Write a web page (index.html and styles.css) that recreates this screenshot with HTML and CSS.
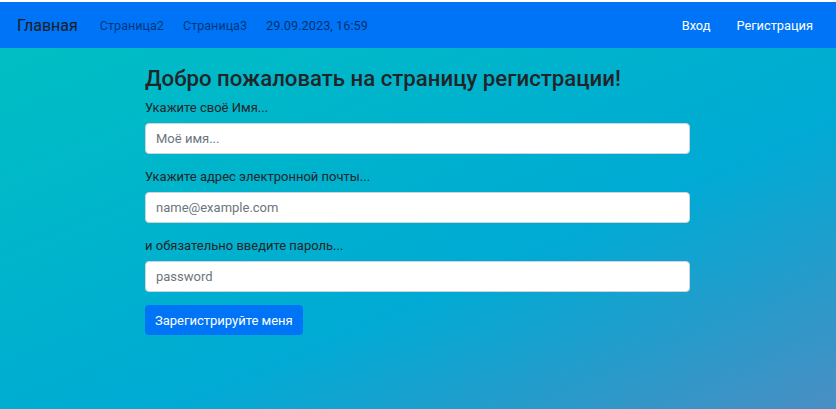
FILE: index.html
```html
<!DOCTYPE html>
<html lang="ru">
<head>
<meta charset="utf-8">
<title>Регистрация</title>
<link rel="stylesheet" href="styles.css">
</head>
<body>
<nav class="navbar">
  <div class="nav-left">
    <a class="brand" href="#">Главная</a>
    <a class="nav-link" href="#">Страница2</a>
    <a class="nav-link" href="#">Страница3</a>
    <span class="nav-date">29.09.2023, 16:59</span>
  </div>
  <div class="nav-right">
    <a class="nav-link light" href="#">Вход</a>
    <a class="nav-link light" href="#">Регистрация</a>
  </div>
</nav>
<main class="content">
  <form class="reg-form">
    <h3 class="title">Добро пожаловать на страницу регистрации!</h3>
    <label class="label" for="name">Укажите своё Имя...</label>
    <input class="field" id="name" type="text" placeholder="Моё имя...">
    <label class="label" for="email">Укажите адрес электронной почты...</label>
    <input class="field" id="email" type="email" placeholder="name@example.com">
    <label class="label" for="pass">и обязательно введите пароль...</label>
    <input class="field" id="pass" type="password" placeholder="password">
    <button class="btn" type="button">Зарегистрируйте меня</button>
  </form>
</main>
</body>
</html>
```
FILE: styles.css
```css
html, body {
  margin: 0;
  height: 100%;
}
body {
  font-family: Roboto, "Noto Sans", sans-serif;
  color: #212529;
  padding-top: 2px;
  box-sizing: border-box;
  background: #fff;
  display: flex;
  flex-direction: column;
}
.navbar {
  height: 46px;
  background: #0074f7;
  display: flex;
  align-items: center;
  justify-content: space-between;
  padding: 0 23px 0 17px;
}
.nav-left, .nav-right {
  display: flex;
  align-items: center;
}
.brand {
  font-size: 16px;
  color: #1a1d21;
  text-decoration: none;
  margin-right: 22px;
}
.nav-link {
  font-size: 12.6px;
  color: rgba(0, 0, 0, 0.55);
  text-decoration: none;
  margin-right: 19px;
}
.nav-date {
  font-size: 12.8px;
  color: rgba(0, 0, 0, 0.6);
}
.nav-right .nav-link {
  font-size: 12.8px;
  margin: 0 0 0 26px;
}
.nav-link.light {
  color: #fff;
}
.content {
  flex: 1;
  background: linear-gradient(to bottom right, #00bfc3 0%, #00aad4 60%, #4a8ec3 100%);
  display: flex;
  justify-content: center;
}
.reg-form {
  width: 545px;
  display: flex;
  flex-direction: column;
  align-items: flex-start;
  padding-top: 17px;
  margin-right: 1px;
}
.title {
  margin: 0 0 7px;
  font-size: 22.2px;
  font-weight: 500;
  line-height: 26px;
}
.label {
  font-size: 13px;
  line-height: 20px;
  margin-bottom: 5px;
}
.field {
  width: 100%;
  box-sizing: border-box;
  height: 31px;
  border: 1px solid #ced4da;
  border-radius: 4px;
  padding: 0 10px;
  font-family: inherit;
  font-size: 13px;
  color: #212529;
  background: #fff;
  margin-bottom: 13px;
}
.field::placeholder {
  color: #6c757d;
}
.btn {
  margin-top: 0;
  height: 30px;
  padding: 0 10px;
  border: none;
  border-radius: 4px;
  background: #0074f7;
  color: #fff;
  font-family: inherit;
  font-size: 13px;
}
```
